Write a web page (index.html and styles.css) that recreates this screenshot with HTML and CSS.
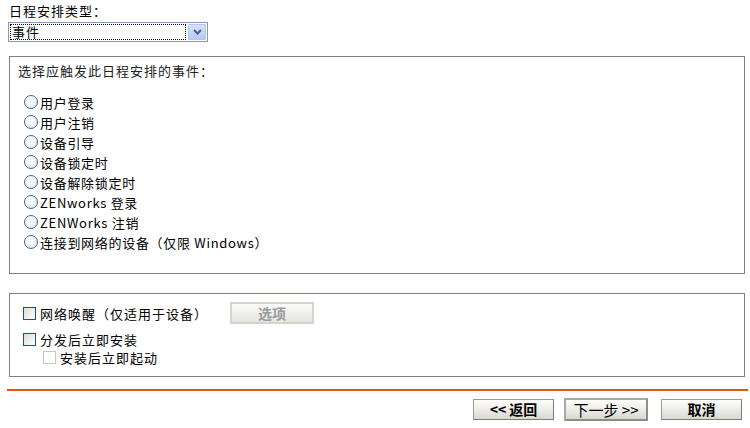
FILE: index.html
```html
<!DOCTYPE html>
<html lang="zh-CN">
<head>
    <meta charset="UTF-8">
    <title>日程安排类型</title>
    <link rel="stylesheet" href="styles.css">
</head>
<body>
    <div class="page">
        <div class="field-label">日程安排类型：</div>
        <div class="select">
            <span class="select-value">事件</span>
            <span class="select-arrow">
                <svg width="9" height="6" viewBox="0 0 9 6"><path d="M1 1 L4.5 4.5 L8 1" fill="none" stroke="#4d6185" stroke-width="2"/></svg>
            </span>
        </div>

        <div class="box events">
            <p class="box-title">选择应触发此日程安排的事件：</p>
            <ul class="radio-list">
                <li><span class="radio"></span>用户登录</li>
                <li><span class="radio"></span>用户注销</li>
                <li><span class="radio"></span>设备引导</li>
                <li><span class="radio"></span>设备锁定时</li>
                <li><span class="radio"></span>设备解除锁定时</li>
                <li><span class="radio"></span>ZENworks 登录</li>
                <li><span class="radio"></span>ZENWorks 注销</li>
                <li><span class="radio"></span>连接到网络的设备（仅限 Windows）</li>
            </ul>
        </div>

        <div class="box options">
            <div class="opt-row first">
                <span class="check"></span>
                <span class="opt-text">网络唤醒（仅适用于设备）</span>
                <button class="btn disabled">选项</button>
            </div>
            <div class="opt-row">
                <span class="check"></span>
                <span class="opt-text">分发后立即安装</span>
            </div>
            <div class="opt-row sub">
                <span class="check off"></span>
                <span class="opt-text">安装后立即起动</span>
            </div>
        </div>

        <div class="rule"></div>

        <div class="actions">
            <button class="btn">&lt;&lt; 返回</button>
            <button class="btn primary">下一步 &gt;&gt;</button>
            <button class="btn">取消</button>
        </div>
    </div>
</body>
</html>
```

FILE: styles.css
```css
body {
    margin: 0;
    font-family: "Noto Sans CJK SC", "DejaVu Sans", sans-serif;
    font-size: 13px;
    color: #000;
    background: #fff;
}
.page {
    padding: 3px 5px 0 9px;
}
.field-label {
    line-height: 16px;
    letter-spacing: 1px;
}
.select {
    margin-top: 3px;
    margin-left: -1px;
    width: 198px;
    height: 18px;
    border: 1px solid #7f9db9;
    display: flex;
    align-items: stretch;
}
.select-value {
    flex: 1;
    margin: 1px;
    padding-left: 2px;
    outline: 1px dotted #000;
    outline-offset: -1px;
    line-height: 16px;
    letter-spacing: 1px;
}
.select-arrow {
    width: 16px;
    margin: 1px;
    background: linear-gradient(#d6e2fd, #b7caf5);
    border: 1px solid #b4c6f0;
    border-radius: 1px;
    display: flex;
    align-items: center;
    justify-content: center;
}
.box {
    border: 1px solid #808078;
}
.events {
    margin-top: 14px;
    padding: 6px 8px 21px;
    height: 189px;
}
.box-title {
    margin: 0;
    line-height: 16px;
    color: #222;
    letter-spacing: 1px;
}
.radio-list {
    list-style: none;
    margin: 13px 0 0;
    padding: 0 0 0 6px;
}
.radio-list li {
    height: 20px;
    display: flex;
    align-items: center;
    letter-spacing: 0.7px;
}
.radio {
    width: 12px;
    height: 12px;
    border: 1px solid #3d6a9c;
    border-radius: 50%;
    background: radial-gradient(circle at 40% 35%, #fff 30%, #d5d9e0 100%);
    margin-right: 2px;
    flex-shrink: 0;
}
.options {
    margin-top: 19px;
    padding: 8px 13px 8px;
    height: 66px;
}
.opt-row {
    display: flex;
    align-items: center;
    height: 18px;
    letter-spacing: 1px;
}
.opt-row.first {
    height: 22px;
    margin-bottom: 6px;
}
.opt-row.sub {
    padding-left: 20px;
}
.check {
    width: 11px;
    height: 11px;
    border: 1px solid #1c5180;
    background: linear-gradient(135deg, #dcdcd7, #fff);
    margin-right: 4px;
    flex-shrink: 0;
}
.check.off {
    border-color: #c9c7ba;
    background: #fff;
}
.opt-text {
    width: 190px;
}
.btn {
    font-family: "Noto Sans CJK SC", "DejaVu Sans", sans-serif;
    font-size: 14px;
    font-weight: bold;
    width: 81px;
    height: 21px;
    padding: 0;
    line-height: 17px;
    color: #000;
    border: 1px solid #9a9a92;
    border-right-color: #7c7c74;
    border-bottom-color: #7c7c74;
    background: linear-gradient(#fdfdfc, #e9e9e4 60%, #d8d8d1);
    cursor: pointer;
}
.btn.disabled {
    width: 84px;
    height: 22px;
    color: #9b9b9b;
    border: 2px solid #d4d4cc;
    background: linear-gradient(#fbfbfa, #e5e5e0);
}
.btn.primary {
    width: 84px;
    height: 23px;
    border: 2px solid #8d8d85;
    border-top-color: #a9a9a1;
    border-left-color: #a9a9a1;
    font-weight: normal;
    font-size: 15px;
}
.rule {
    height: 2px;
    background: #d75a1a;
    margin: 12px -3px 0 -2px;
}
.actions {
    display: flex;
    justify-content: flex-end;
    align-items: center;
    gap: 10px;
    padding: 7px 3px 0 0;
}
.actions .btn.primary + .btn {
    margin-left: 3px;
}
```
